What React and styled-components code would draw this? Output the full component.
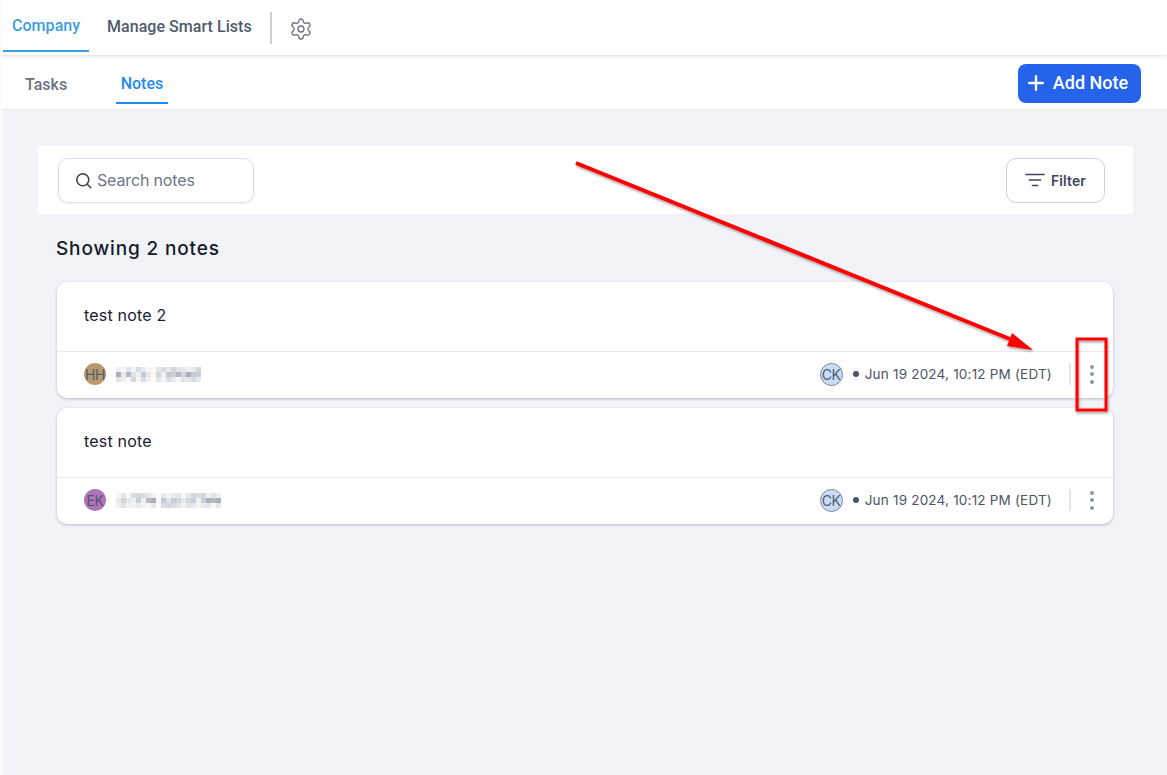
import React from 'react';
import styled, { createGlobalStyle } from 'styled-components';

const GlobalStyle = createGlobalStyle`
  html, body { margin: 0; padding: 0; height: 100%; }
  body { background: #f1f3f8; font-family: Inter, "Liberation Sans", sans-serif; }
  * { box-sizing: border-box; }
`;

const Page = styled.div`
  position: relative;
  width: 1167px;
  height: 775px;
  overflow: hidden;
  background: #f1f3f8;
  border-left: 2px solid #fbfbfc;
`;

const TopBar = styled.header`
  position: relative;
  z-index: 2;
  height: 55px;
  margin-left: -2px;
  padding-left: 3px;
  display: flex;
  align-items: flex-start;
  background: #fff;
  box-shadow: 0 1px 4px rgba(40, 50, 70, 0.18);
  font-family: Roboto, sans-serif;
`;

const TopTab = styled.div`
  height: 52px;
  padding: ${p => (p.$active ? '0 9px' : '0 18px')};
  width: ${p => (p.$active ? '86px' : 'auto')};
  display: flex;
  align-items: center;
  font-size: 16px;
  font-weight: 500;
  letter-spacing: 0.05px;
  white-space: nowrap;
  color: ${p => (p.$active ? '#3b9fe0' : '#4f5b6b')};
  border-bottom: ${p => (p.$active ? '2px solid #3b9fe0' : 'none')};
`;

const TopDivider = styled.div`
  width: 2px;
  height: 32px;
  margin: 12px 0 0 0;
  background: #ced0d6;
`;

const GearButton = styled.div`
  height: 55px;
  padding: 2px 0 0 17px;
  display: flex;
  align-items: center;
  color: #6b7280;
`;

const SubBar = styled.div`
  height: 55px;
  display: flex;
  align-items: flex-start;
  justify-content: space-between;
  padding-right: 26px;
  background: #fff;
  border-bottom: 1px solid #e8eaef;
  font-family: Roboto, sans-serif;
`;

const SubTabs = styled.nav`
  display: flex;
  padding-left: 23px;
  gap: 48.5px;
`;

const SubTab = styled.div`
  height: 49px;
  display: flex;
  align-items: center;
  padding: 9px ${p => (p.$active ? '5px' : '0')} 0;
  font-size: 16px;
  font-weight: 500;
  color: ${p => (p.$active ? '#1f8af0' : '#6b7280')};
  border-bottom: ${p => (p.$active ? '2px solid #1f8af0' : 'none')};
`;

const AddButton = styled.button`
  margin-top: 9px;
  width: 123px;
  height: 39px;
  display: flex;
  align-items: center;
  justify-content: center;
  gap: 9px;
  padding: 0 3px 2px 0;
  border: none;
  border-radius: 8px;
  background: #2563eb;
  color: #fff;
  font-family: Roboto, sans-serif;
  font-size: 18px;
  font-weight: 500;
`;

const Content = styled.main`
  padding: 36px 34px 0 36px;
`;

const SearchRow = styled.section`
  height: 68px;
  display: flex;
  align-items: center;
  justify-content: space-between;
  padding: 0 28px 0 20px;
  background: #fff;
`;

const SearchBox = styled.div`
  width: 196px;
  height: 45px;
  display: flex;
  align-items: center;
  gap: 5px;
  padding-left: 16px;
  border: 1px solid #dcdee6;
  border-radius: 10px;
  background: #fff;
  box-shadow: 0 1px 2px rgba(20, 30, 50, 0.05);
  font-size: 16px;
  letter-spacing: -0.15px;
  color: #6b7788;
`;

const FilterButton = styled.button`
  width: 99px;
  height: 45px;
  display: flex;
  align-items: center;
  justify-content: center;
  gap: 6px;
  border: 1px solid #cfd2dc;
  border-radius: 10px;
  background: #fff;
  font-family: Inter, sans-serif;
  font-size: 14px;
  font-weight: 600;
  letter-spacing: 0.1px;
  color: #3d4759;
`;

const Heading = styled.h2`
  margin: 23px 0 21px 18px;
  font-size: 19px;
  line-height: 24px;
  font-weight: 500;
  letter-spacing: 0.85px;
  color: #151b28;
`;

const NotesList = styled.div`
  display: flex;
  flex-direction: column;
  gap: 10px;
  margin: 0 20px 0 19px;
`;

const NoteCard = styled.article`
  height: 116px;
  background: #fff;
  border-radius: 10px;
  box-shadow: 0 1px 3px rgba(30, 40, 60, 0.28);
`;

const NoteBody = styled.div`
  height: 70px;
  display: flex;
  align-items: center;
  padding: 0 0 3px 27px;
  border-bottom: 1px solid #e8eaef;
  font-size: 16px;
  letter-spacing: 0.2px;
  color: #1a2030;
`;

const NoteFooter = styled.div`
  height: 44px;
  display: flex;
  align-items: center;
  padding: 0 0 0 27px;
`;

const Avatar = styled.div`
  width: ${p => (p.$outlined ? '23px' : '22px')};
  height: ${p => (p.$outlined ? '23px' : '22px')};
  display: flex;
  align-items: center;
  justify-content: center;
  flex: none;
  border-radius: 50%;
  font-size: 14px;
  letter-spacing: -0.3px;
  color: #4f5b6f;
  background: ${p => p.$bg};
  border: ${p => (p.$outlined ? '1px solid #7f8794' : 'none')};
`;

const Meta = styled.div`
  margin-left: auto;
  display: flex;
  align-items: center;
  font-size: 13.5px;
  letter-spacing: 0.2px;
  color: #4b5563;
`;

const Dot = styled.span`
  width: 6px;
  height: 6px;
  margin: 0 6px 0 10px;
  border-radius: 50%;
  background: #4b5563;
`;

const MetaDivider = styled.div`
  width: 2px;
  height: 22px;
  margin-left: 17px;
  background: #e4e6eb;
`;

const MenuDots = styled.div`
  width: 42px;
  display: flex;
  flex-direction: column;
  align-items: center;
  gap: 3.5px;
  span {
    width: 4px;
    height: 4px;
    border-radius: 50%;
    background: #8d96a6;
  }
`;

const Overlay = styled.svg`
  position: absolute;
  left: -2px;
  top: 0;
  pointer-events: none;
  z-index: 3;
`;

const EdgeMark = styled.div`
  position: absolute;
  left: -2px;
  top: 155px;
  width: 1px;
  height: 2px;
  background: #1f8af0;
`;

const blurPalette = ['#e6e9ee', '#c9ced6', '#b4bac4', '#dfe3e8', '#d2d7de', '#eef0f3', '#a9b0ba', '#c3ccd6'];

// the names are pixelated out in the screenshot, so they are just blocks here
const BlurredName = ({ width, seed }) => {
  const cells = [];
  const columns = Math.floor(width / 5);
  for (let x = 0; x < columns; x++) {
    for (let y = 0; y < 3; y++) {
      const pick = (x * 7 + y * 3 + seed * (x % 3 + 1)) % blurPalette.length;
      const gap = x === Math.floor(columns * 0.42);
      cells.push(
        <rect
          key={`${x}-${y}`}
          x={x * 5}
          y={y * 5}
          width="5"
          height="5"
          fill={gap ? '#fbf8f5' : blurPalette[pick]}
          opacity={y === 1 ? 1 : 0.5}
        />
      );
    }
  }
  return (
    <svg width={width} height="15" style={{ marginLeft: 10 }}>
      {cells}
    </svg>
  );
};

const Note = ({ text, initials, color, nameWidth, seed }) => (
  <NoteCard>
    <NoteBody>{text}</NoteBody>
    <NoteFooter>
      <Avatar $bg={color}>{initials}</Avatar>
      <BlurredName width={nameWidth} seed={seed} />
      <Meta>
        <Avatar $bg="#c9dcf8" $outlined>CK</Avatar>
        <Dot />
        Jun 19 2024, 10:12 PM (EDT)
        <MetaDivider />
        <MenuDots>
          <span />
          <span />
          <span />
        </MenuDots>
      </Meta>
    </NoteFooter>
  </NoteCard>
);

const GearIcon = () => (
  <svg width="24" height="24" viewBox="0 0 24 24" fill="none" stroke="currentColor" strokeWidth="1.3" strokeLinecap="round" strokeLinejoin="round">
    <path d="M12.22 2h-.44a2 2 0 0 0-2 2v.18a2 2 0 0 1-1 1.73l-.43.25a2 2 0 0 1-2 0l-.15-.08a2 2 0 0 0-2.73.73l-.22.38a2 2 0 0 0 .73 2.73l.15.1a2 2 0 0 1 1 1.72v.51a2 2 0 0 1-1 1.74l-.15.09a2 2 0 0 0-.73 2.73l.22.38a2 2 0 0 0 2.73.73l.15-.08a2 2 0 0 1 2 0l.43.25a2 2 0 0 1 1 1.73V20a2 2 0 0 0 2 2h.44a2 2 0 0 0 2-2v-.18a2 2 0 0 1 1-1.73l.43-.25a2 2 0 0 1 2 0l.15.08a2 2 0 0 0 2.73-.73l.22-.39a2 2 0 0 0-.73-2.73l-.15-.08a2 2 0 0 1-1-1.74v-.5a2 2 0 0 1 1-1.74l.15-.09a2 2 0 0 0 .73-2.73l-.22-.38a2 2 0 0 0-2.73-.73l-.15.08a2 2 0 0 1-2 0l-.43-.25a2 2 0 0 1-1-1.73V4a2 2 0 0 0-2-2z" />
    <circle cx="12" cy="12" r="3" />
  </svg>
);

const PlusIcon = () => (
  <svg width="16" height="16" viewBox="0 0 16 16" stroke="currentColor" strokeWidth="2.4" strokeLinecap="round">
    <path d="M8 1.2v13.6M1.2 8h13.6" />
  </svg>
);

const SearchIcon = () => (
  <svg width="17" height="17" viewBox="0 0 17 17" fill="none" stroke="#3d4759" strokeWidth="1.6" strokeLinecap="round">
    <circle cx="7.8" cy="7.8" r="6" />
    <path d="M12.3 12.3l3.4 3.4" />
  </svg>
);

const FilterIcon = () => (
  <svg width="20" height="14" viewBox="0 0 20 14" stroke="#3d4759" strokeWidth="1.7" strokeLinecap="round">
    <path d="M1 1.5h18M4.5 7h11M7.5 12.5h5" />
  </svg>
);

const Annotation = () => (
  <Overlay width="1167" height="775" viewBox="0 0 1167 775">
    <defs>
      <filter id="annotationShadow" x="-10%" y="-10%" width="120%" height="120%">
        <feDropShadow dx="1" dy="2" stdDeviation="1.2" floodColor="#000" floodOpacity="0.35" />
      </filter>
    </defs>
    <g filter="url(#annotationShadow)">
      <path d="M576 163L1010 339" stroke="#ff0000" strokeWidth="4" fill="none" />
      <path d="M1033 350L1007 346L1012 333Z" fill="#ff0000" />
      <rect x="1077" y="339" width="29" height="71" stroke="#ff0000" strokeWidth="3" fill="none" />
    </g>
  </Overlay>
);

export default function App() {
  return (
    <Page>
      <GlobalStyle />
      <TopBar>
        <TopTab $active>Company</TopTab>
        <TopTab>Manage Smart Lists</TopTab>
        <TopDivider />
        <GearButton>
          <GearIcon />
        </GearButton>
      </TopBar>
      <SubBar>
        <SubTabs>
          <SubTab>Tasks</SubTab>
          <SubTab $active>Notes</SubTab>
        </SubTabs>
        <AddButton>
          <PlusIcon />
          Add Note
        </AddButton>
      </SubBar>
      <Content>
        <SearchRow>
          <SearchBox>
            <SearchIcon />
            Search notes
          </SearchBox>
          <FilterButton>
            <FilterIcon />
            Filter
          </FilterButton>
        </SearchRow>
        <Heading>Showing 2 notes</Heading>
        <NotesList>
          <Note text="test note 2" initials="HH" color="#b99a6e" nameWidth={88} seed={3} />
          <Note text="test note" initials="EK" color="#b271b8" nameWidth={105} seed={5} />
        </NotesList>
      </Content>
      <EdgeMark />
      <Annotation />
    </Page>
  );
}
